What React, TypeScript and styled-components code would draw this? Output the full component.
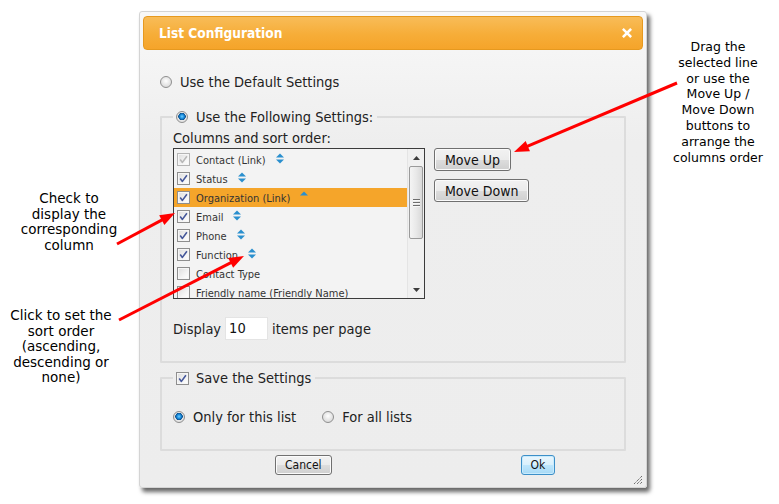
import React from "react";
import styled, { createGlobalStyle } from "styled-components";

const Global = createGlobalStyle`
  html, body { margin: 0; padding: 0; background: #ffffff; }
  body { width: 779px; height: 504px; overflow: hidden; }
`;

const UI_FONT = `"DejaVu Sans Condensed", "DejaVu Sans", sans-serif`;
const NOTE_FONT = `"DejaVu Sans", Verdana, sans-serif`;

const Page = styled.div`
  position: relative;
  width: 779px;
  height: 504px;
  display: grid;
  grid-template-columns: 139px 508px 132px;
  align-items: start;
`;

const LeftNotes = styled.div`
  display: flex;
  flex-direction: column;
  padding-top: 191px;
`;

const RightNotes = styled.div`
  padding: 39px 0 0 10px;
`;

const Note = styled.div<{ $size: number; $line: number; $padRight?: number; $gapTop?: number }>`
  font-family: ${NOTE_FONT};
  font-size: ${(p) => p.$size}px;
  line-height: ${(p) => p.$line}px;
  color: #000;
  text-align: center;
  padding-right: ${(p) => p.$padRight ?? 0}px;
  margin-top: ${(p) => p.$gapTop ?? 0}px;
  white-space: nowrap;
`;

const Dialog = styled.div`
  position: relative;
  margin-top: 11px;
  width: 508px;
  height: 477px;
  box-sizing: border-box;
  border: 1px solid #d4d4d4;
  border-radius: 3px;
  background: linear-gradient(to bottom, #f8f8f8 0px, #eeeeee 130px, #ededed 100%);
  box-shadow: 3px 4px 4px rgba(0, 0, 0, 0.6);
  padding: 4px 3px 0 3px;
  font-family: ${UI_FONT};
  font-size: 14.5px;
  color: #222;
  display: flex;
  flex-direction: column;
`;

const Header = styled.div`
  height: 34px;
  box-sizing: border-box;
  border: 1px solid #e6991f;
  border-radius: 4px;
  background: linear-gradient(to bottom, #f8bc58 0%, #f6ad38 55%, #f5a42a 100%);
  display: flex;
  align-items: center;
  justify-content: space-between;
  padding: 0 10px 0 15px;
`;

const Title = styled.span`
  font-family: ${UI_FONT};
  font-weight: bold;
  font-size: 13.6px;
  color: #ffffff;
`;

const CloseIcon = styled.svg`
  width: 10px;
  height: 10px;
  display: block;
`;

const Body = styled.div`
  padding-left: 17px;
  width: 466px;
  display: flex;
  flex-direction: column;
`;

const OptionRow = styled.label<{ $top?: number; $gap?: number }>`
  display: flex;
  align-items: center;
  height: 18px;
  line-height: 18px;
  margin-top: ${(p) => p.$top ?? 0}px;
  gap: ${(p) => p.$gap ?? 8}px;
  white-space: nowrap;
`;

const RadioDot = styled.span<{ $on?: boolean }>`
  width: 12px;
  height: 12px;
  box-sizing: border-box;
  border-radius: 50%;
  border: 1px solid #8f8f8f;
  background: ${(p) =>
    p.$on
      ? "radial-gradient(circle at 50% 45%, #6fd0ff 0, #1b8ee0 2px, #0b4f8c 3.5px, #e8e8e8 4px, #d4d4d4 100%)"
      : "radial-gradient(circle at 50% 40%, #ffffff 0, #ececec 3px, #d0d0d0 100%)"};
  flex: none;
`;

const CheckBox = styled.span<{ $disabled?: boolean }>`
  width: 13px;
  height: 13px;
  box-sizing: border-box;
  border: 1px solid ${(p) => (p.$disabled ? "#b5b5b5" : "#8e8e8e")};
  background: linear-gradient(135deg, #dcdcdc 0%, #f4f4f4 60%, #ffffff 100%);
  box-shadow: inset 0 0 0 1px #f6f6f6;
  flex: none;
  display: flex;
  align-items: center;
  justify-content: center;
`;

const CheckMark = styled.svg`
  width: 9px;
  height: 9px;
  display: block;
`;

const Fieldset = styled.fieldset<{ $top: number; $bottom: number }>`
  margin: ${(p) => p.$top}px 0 0 0;
  padding: 0 10px ${(p) => p.$bottom}px 11px;
  border: 2px solid #dcdcdc;
  border-radius: 1px;
  min-inline-size: 0;
  width: 466px;
  box-sizing: border-box;
`;

const Legend = styled.legend`
  padding: 0 4px 0 3px;
  height: 18px;
  line-height: 18px;
`;

const LegendInner = styled.span<{ $gap: number }>`
  display: flex;
  align-items: center;
  gap: ${(p) => p.$gap}px;
  white-space: nowrap;
`;

const SectionLabel = styled.div`
  margin-top: 3px;
  height: 18px;
  line-height: 18px;
`;

const ListArea = styled.div`
  margin-top: 1px;
  display: flex;
  align-items: flex-start;
  gap: 9px;
`;

const ListBox = styled.div`
  width: 252px;
  height: 151px;
  box-sizing: border-box;
  border: 1px solid #3b3b3b;
  background: #f3f3f3;
  display: flex;
  overflow: hidden;
`;

const Rows = styled.div`
  flex: 1;
  padding-top: 1px;
  display: flex;
  flex-direction: column;
  overflow: hidden;
`;

const Row = styled.div<{ $selected?: boolean }>`
  flex: none;
  height: 19px;
  display: flex;
  align-items: center;
  padding-left: 3px;
  background: ${(p) => (p.$selected ? "#f5a52a" : "transparent")};
  font-size: 11px;
  color: #333;
  white-space: nowrap;
`;

const RowText = styled.span`
  margin-left: 6px;
  margin-top: 2px;
`;

const SortIcon = styled.svg`
  width: 8px;
  height: 11px;
  margin-left: 10px;
  margin-top: -3px;
  display: block;
  flex: none;
`;

const ScrollBar = styled.div`
  width: 16px;
  flex: none;
  background: #f0f0f0;
  border-left: 1px solid #e4e4e4;
  display: flex;
  flex-direction: column;
  align-items: center;
`;

const ScrollArrow = styled.div`
  height: 17px;
  width: 100%;
  display: flex;
  align-items: center;
  justify-content: center;
  flex: none;
`;

const Thumb = styled.div`
  width: 14px;
  height: 73px;
  box-sizing: border-box;
  border: 1px solid #9a9a9a;
  border-radius: 2px;
  background: linear-gradient(to right, #f4f4f4 0%, #e9e9e9 50%, #d9d9d9 100%);
  display: flex;
  flex-direction: column;
  align-items: center;
  justify-content: center;
  gap: 1px;
  flex: none;
`;

const Grip = styled.span`
  width: 7px;
  height: 1px;
  background: #6e6e6e;
  border-bottom: 1px solid #f8f8f8;
`;

const ScrollSpacer = styled.div`
  flex: 1;
`;

const SideButtons = styled.div`
  display: flex;
  flex-direction: column;
  align-items: flex-start;
  gap: 8px;
`;

const WinButton = styled.button<{ $h: number; $size: number; $pad: number; $focused?: boolean }>`
  height: ${(p) => p.$h}px;
  padding: 0 ${(p) => p.$pad}px;
  font-family: ${UI_FONT};
  font-size: ${(p) => p.$size}px;
  color: #111;
  border-radius: 3px;
  border: 1px solid ${(p) => (p.$focused ? "#3c8fc8" : "#707070")};
  background: ${(p) =>
    p.$focused
      ? "linear-gradient(to bottom, #eaf6fd 0%, #d9f0fc 50%, #bee6fd 51%, #a7d9f5 100%)"
      : "linear-gradient(to bottom, #f2f2f2 0%, #ebebeb 50%, #dddddd 51%, #cfcfcf 100%)"};
  box-shadow: inset 0 0 0 1px ${(p) => (p.$focused ? "#c8ebfd" : "#fbfbfb")};
  line-height: 1;
  cursor: default;
  white-space: nowrap;
`;

const DisplayRow = styled.div`
  margin-top: 18px;
  display: flex;
  align-items: center;
  height: 23px;
  white-space: nowrap;
`;

const CountInput = styled.div`
  width: 43px;
  height: 23px;
  box-sizing: border-box;
  margin: 0 4px 0 4px;
  background: #ffffff;
  border: 1px solid #e4e4e4;
  padding-left: 3px;
  line-height: 21px;
  color: #111;
`;

const OptionsLine = styled.div`
  margin-top: 21px;
  display: flex;
  align-items: center;
  gap: 26px;
`;

const Footer = styled.div`
  margin-top: 4px;
  display: flex;
  align-items: center;
  padding-left: 115px;
  gap: 189px;
`;

const ResizeGrip = styled.svg`
  position: absolute;
  right: 3px;
  bottom: 2px;
  width: 11px;
  height: 11px;
`;

const Overlay = styled.svg`
  position: absolute;
  left: 0;
  top: 0;
  width: 779px;
  height: 504px;
  pointer-events: none;
`;

const Check = ({ disabled }: { disabled?: boolean }) => (
  <CheckBox $disabled={disabled}>
    <CheckMark viewBox="0 0 9 9">
      <path
        d="M1.2 4.6 L3.4 7.4 L7.9 1.2"
        fill="none"
        stroke={disabled ? "#b8b8b8" : "#45579a"}
        strokeWidth="1.6"
        strokeLinejoin="round"
      />
    </CheckMark>
  </CheckBox>
);

const Box = () => <CheckBox />;

const Sort = ({ up, down }: { up?: boolean; down?: boolean }) => (
  <SortIcon viewBox="0 0 8 11">
    {up && <polygon points="0,4.5 4,0.5 8,4.5" fill="#2a8fce" />}
    {down && <polygon points="0,6.5 8,6.5 4,10.5" fill="#2a8fce" />}
  </SortIcon>
);

type Item = { label: string; checked: boolean; disabled?: boolean; sort?: "both" | "up"; selected?: boolean };

const items: Item[] = [
  { label: "Contact (Link)", checked: true, disabled: true, sort: "both" },
  { label: "Status", checked: true, sort: "both" },
  { label: "Organization (Link)", checked: true, sort: "up", selected: true },
  { label: "Email", checked: true, sort: "both" },
  { label: "Phone", checked: true, sort: "both" },
  { label: "Function", checked: true, sort: "both" },
  { label: "Contact Type", checked: false },
  { label: "Friendly name (Friendly Name)", checked: false },
];

type ArrowSpec = { x1: number; y1: number; x2: number; y2: number };
const arrows: ArrowSpec[] = [
  { x1: 677, y1: 83, x2: 514, y2: 152 },
  { x1: 117, y1: 244, x2: 175, y2: 213 },
  { x1: 119, y1: 320, x2: 244, y2: 256 },
];

const Arrow = ({ x1, y1, x2, y2 }: ArrowSpec) => {
  const dx = x2 - x1;
  const dy = y2 - y1;
  const len = Math.hypot(dx, dy);
  const ux = dx / len;
  const uy = dy / len;
  const hl = 15;
  const hw = 5.5;
  const bx = x2 - ux * hl;
  const by = y2 - uy * hl;
  const px = -uy;
  const py = ux;
  const pts = `${x2},${y2} ${bx + px * hw},${by + py * hw} ${bx - px * hw},${by - py * hw}`;
  return (
    <g>
      <line x1={x1} y1={y1} x2={bx + ux * 2} y2={by + uy * 2} stroke="#ff0000" strokeWidth={3} />
      <polygon points={pts} fill="#ff0000" />
    </g>
  );
};

export default function App() {
  return (
    <>
      <Global />
      <Page>
        <LeftNotes>
          <Note $size={13.5} $line={15.5} $padRight={1}>
            Check to
            <br />
            display the
            <br />
            corresponding
            <br />
            column
          </Note>
          <Note $size={13.5} $line={15.5} $padRight={17} $gapTop={55}>
            Click to set the
            <br />
            sort order
            <br />
            (ascending,
            <br />
            descending or
            <br />
            none)
          </Note>
        </LeftNotes>

        <Dialog>
          <Header>
            <Title>List Configuration</Title>
            <CloseIcon viewBox="0 0 10 10">
              <path d="M1.8 1.8 L8.2 8.2 M8.2 1.8 L1.8 8.2" stroke="#ffffff" strokeWidth="2.6" strokeLinecap="square" />
            </CloseIcon>
          </Header>

          <Body>
            <OptionRow $top={23} $gap={8}>
              <RadioDot />
              Use the Default Settings
            </OptionRow>

            <Fieldset $top={17} $bottom={21}>
              <Legend>
                <LegendInner $gap={8}>
                  <RadioDot $on />
                  Use the Following Settings:
                </LegendInner>
              </Legend>
              <SectionLabel>Columns and sort order:</SectionLabel>
              <ListArea>
                <ListBox>
                  <Rows>
                    {items.map((it) => (
                      <Row key={it.label} $selected={it.selected}>
                        {it.checked ? <Check disabled={it.disabled} /> : <Box />}
                        <RowText>{it.label}</RowText>
                        {it.sort && <Sort up down={it.sort === "both"} />}
                      </Row>
                    ))}
                  </Rows>
                  <ScrollBar>
                    <ScrollArrow>
                      <svg width="7" height="4" viewBox="0 0 7 4">
                        <polygon points="0,4 3.5,0 7,4" fill="#3c3c3c" />
                      </svg>
                    </ScrollArrow>
                    <Thumb>
                      <Grip />
                      <Grip />
                      <Grip />
                    </Thumb>
                    <ScrollSpacer />
                    <ScrollArrow>
                      <svg width="7" height="4" viewBox="0 0 7 4">
                        <polygon points="0,0 7,0 3.5,4" fill="#3c3c3c" />
                      </svg>
                    </ScrollArrow>
                  </ScrollBar>
                </ListBox>
                <SideButtons>
                  <WinButton $h={23} $size={14} $pad={10}>
                    Move Up
                  </WinButton>
                  <WinButton $h={23} $size={14} $pad={10}>
                    Move Down
                  </WinButton>
                </SideButtons>
              </ListArea>
              <DisplayRow>
                Display
                <CountInput>10</CountInput>
                items per page
              </DisplayRow>
            </Fieldset>

            <Fieldset $top={6} $bottom={23}>
              <Legend>
                <LegendInner $gap={7}>
                  <Check />
                  Save the Settings
                </LegendInner>
              </Legend>
              <OptionsLine>
                <OptionRow $gap={8}>
                  <RadioDot $on />
                  Only for this list
                </OptionRow>
                <OptionRow $gap={8}>
                  <RadioDot />
                  For all lists
                </OptionRow>
              </OptionsLine>
            </Fieldset>

            <Footer>
              <WinButton $h={20} $size={12} $pad={9}>
                Cancel
              </WinButton>
              <WinButton $h={20} $size={12} $pad={9} $focused>
                Ok
              </WinButton>
            </Footer>
          </Body>

          <ResizeGrip viewBox="0 0 11 11">
            <path d="M10 2 L2 10 M10 5 L5 10 M10 8 L8 10" stroke="#555" strokeWidth="1" strokeDasharray="1.2 0.8" />
          </ResizeGrip>
        </Dialog>

        <RightNotes>
          <Note $size={12.5} $line={15.8}>
            Drag the
            <br />
            selected line
            <br />
            or use the
            <br />
            Move Up /
            <br />
            Move Down
            <br />
            buttons to
            <br />
            arrange the
            <br />
            columns order
          </Note>
        </RightNotes>

        <Overlay viewBox="0 0 779 504">
          {arrows.map((a, i) => (
            <Arrow key={i} {...a} />
          ))}
        </Overlay>
      </Page>
    </>
  );
}
